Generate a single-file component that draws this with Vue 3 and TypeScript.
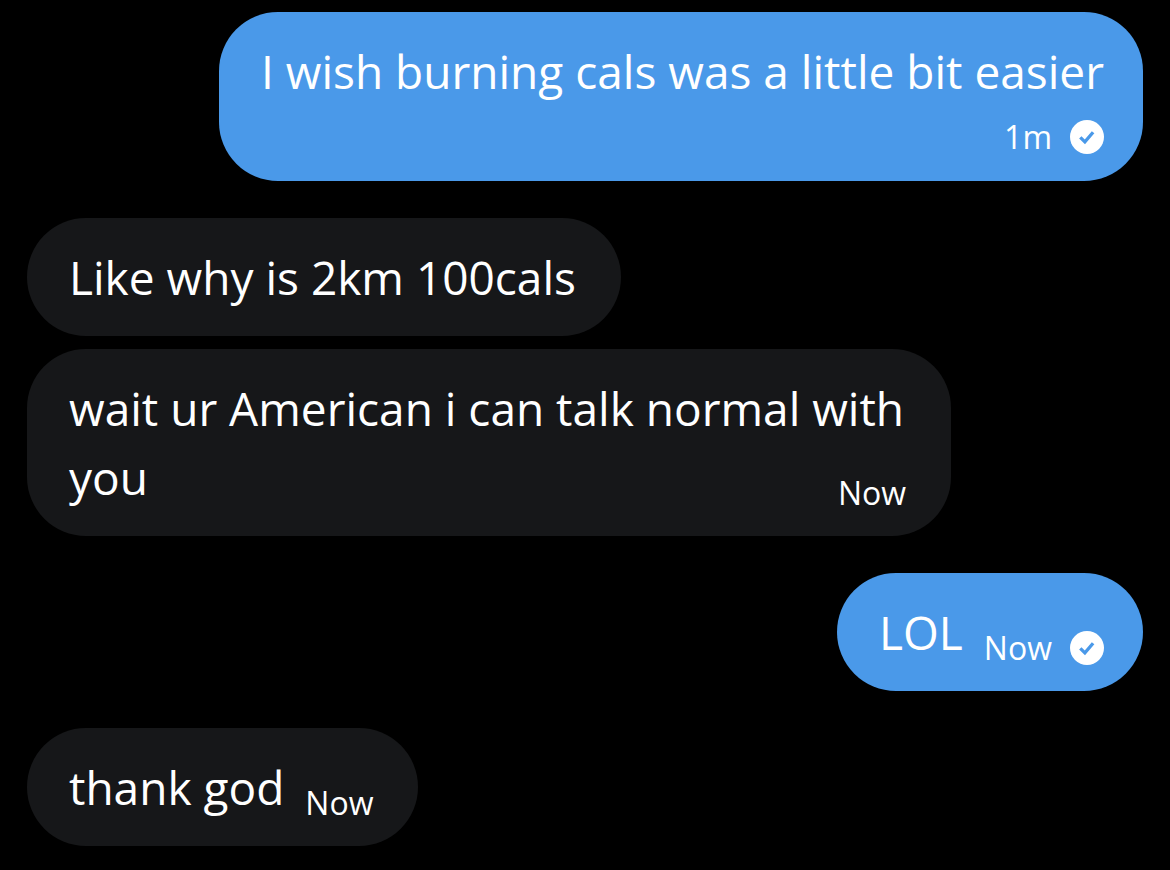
<script setup lang="ts">
interface Message {
  id: number
  text: string
  mine: boolean
  time?: string
  timeBelow?: boolean
}

const groups: Message[][] = [
  [{ id: 1, text: 'I wish burning cals was a little bit easier', mine: true, time: '1m', timeBelow: true }],
  [
    { id: 2, text: 'Like why is 2km 100cals', mine: false },
    { id: 3, text: 'wait ur American i can talk normal with you', mine: false, time: 'Now' },
  ],
  [{ id: 4, text: 'LOL', mine: true, time: 'Now' }],
  [{ id: 5, text: 'thank god', mine: false, time: 'Now' }],
]
</script>

<template>
  <main class="chat">
    <section v-for="(group, index) in groups" :key="index" class="group">
      <div v-for="message in group" :key="message.id" class="bubble" :class="{ mine: message.mine }">
        <span>{{ message.text }}</span>
        <span v-if="message.time" class="meta" :class="{ below: message.timeBelow }">
          <time>{{ message.time }}</time>
          <svg v-if="message.mine" class="sent" viewBox="0 0 34 34" role="img" aria-label="Sent">
            <circle cx="17" cy="17" r="17" fill="#fff" />
            <path d="M10.3 17.3l4.6 4.6 8.2-9.7" fill="none" stroke="#4a99e9" stroke-width="3.3" />
          </svg>
        </span>
      </div>
    </section>
  </main>
</template>

<style>
body {
  margin: 0;
  background: #000;
}
</style>

<style scoped>
.chat {
  display: flex;
  flex-direction: column;
  gap: 37px;
  padding: 12px 27px 24px;
  color: #fff;
  font-family: "Open Sans", "Noto Sans", sans-serif;
  font-size: 46px;
  line-height: 69px;
}

.group {
  display: flex;
  flex-direction: column;
  align-items: flex-start;
  gap: 13px;
}

.bubble {
  box-sizing: border-box;
  display: flow-root;
  max-width: 82.8%;
  padding: 25px 45px 24px 42px;
  border-radius: 59px;
  background: #161719;
}

.bubble.mine {
  align-self: flex-end;
  padding-right: 39px;
  background: #4a99e9;
}

.meta {
  float: right;
  display: flex;
  align-items: center;
  gap: 18px;
  height: 34px;
  margin: 33px 0 2px 21px;
  font-size: 32px;
  line-height: 34px;
}

.meta.below {
  margin-top: 14px;
  margin-bottom: 3px;
}

.sent {
  width: 34px;
  height: 34px;
}
</style>
